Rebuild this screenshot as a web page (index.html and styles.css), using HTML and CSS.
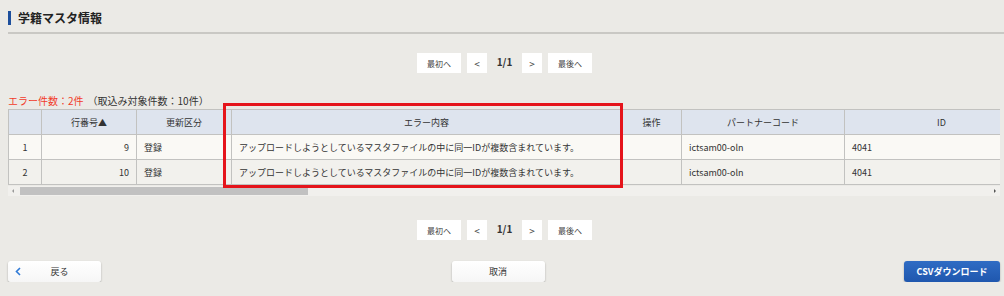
FILE: index.html
```html
<!DOCTYPE html>
<html lang="ja">
  <head>
    <meta charset="utf-8" />
    <title>学籍マスタ情報</title>
    <link rel="stylesheet" href="styles.css">
  </head>
  <body>
    <div class="page">
      <h1 class="pageTitle">学籍マスタ情報</h1>

      <div class="pager">
        <span class="pageBtn wide">最初へ</span>
        <span class="pageBtn">&lt;</span>
        <span class="pageNum">1/1</span>
        <span class="pageBtn">&gt;</span>
        <span class="pageBtn wide">最後へ</span>
      </div>

      <p class="errorCount"><span class="errRed">エラー件数：2件</span>（取込み対象件数：10件）</p>

      <div class="tableArea">
        <div class="tableScroll">
          <table class="resultTable">
            <colgroup>
              <col style="width:33px">
              <col style="width:95px">
              <col style="width:95px">
              <col style="width:390px">
              <col style="width:60px">
              <col style="width:163px">
              <col style="width:194px">
            </colgroup>
            <thead>
              <tr>
                <th></th>
                <th>行番号▲</th>
                <th>更新区分</th>
                <th>エラー内容</th>
                <th>操作</th>
                <th>パートナーコード</th>
                <th>ID</th>
              </tr>
            </thead>
            <tbody>
              <tr>
                <td class="center">1</td>
                <td class="num">9</td>
                <td>登録</td>
                <td>アップロードしようとしているマスタファイルの中に同一IDが複数含まれています。</td>
                <td></td>
                <td>ictsam00-oln</td>
                <td>4041</td>
              </tr>
              <tr>
                <td class="center">2</td>
                <td class="num">10</td>
                <td>登録</td>
                <td>アップロードしようとしているマスタファイルの中に同一IDが複数含まれています。</td>
                <td></td>
                <td>ictsam00-oln</td>
                <td>4041</td>
              </tr>
            </tbody>
          </table>
        </div>
        <div class="hScroll">
          <span class="arrowLeft"></span>
          <div class="hTrack"><div class="hThumb"></div></div>
          <span class="arrowRight"></span>
        </div>
        <div class="markBox"></div>
      </div>

      <div class="pager lower">
        <span class="pageBtn wide">最初へ</span>
        <span class="pageBtn">&lt;</span>
        <span class="pageNum">1/1</span>
        <span class="pageBtn">&gt;</span>
        <span class="pageBtn wide">最後へ</span>
      </div>

      <div class="footerBtns">
        <button class="btn backBtn">
          <svg class="chev" width="6" height="9" viewBox="0 0 6 9"><path d="M5 1 L1.5 4.5 L5 8" fill="none" stroke="#2f7ad6" stroke-width="1.6"/></svg>
          戻る
        </button>
        <button class="btn cancelBtn">取消</button>
        <button class="btn csvBtn">CSVダウンロード</button>
      </div>
    </div>
  </body>
</html>
```

FILE: styles.css
```css
html {
  background-color: #ebeae6;
}

body {
  margin: 0;
  font-family: "Noto Sans CJK JP", "Noto Sans", sans-serif;
  color: #333;
}

.page {
  padding: 0 0 0 8px;
}

.pageTitle {
  margin: 0;
  padding: 10px 0 6px 10px;
  font-size: 12px;
  line-height: 16px;
  font-weight: bold;
  color: #222;
  border-bottom: 2px solid #c9c8c4;
  position: relative;
}

.pageTitle::before {
  content: "";
  position: absolute;
  left: 0;
  top: 11px;
  width: 3px;
  height: 14px;
  background-color: #1d4f9c;
}

.pager {
  display: flex;
  justify-content: center;
  align-items: center;
  gap: 6px;
  margin-top: 19px;
  margin-right: 3px;
  height: 20px;
}

.pager.lower {
  margin-top: 24px;
}

.pageBtn {
  display: flex;
  align-items: center;
  justify-content: center;
  width: 20px;
  height: 20px;
  background-color: #fff;
  font-size: 10px;
  color: #444;
}

.pageBtn.wide {
  width: 44px;
  font-size: 8px;
}

.pageNum {
  width: 23px;
  text-align: center;
  font-size: 10px;
  font-weight: bold;
  color: #333;
  margin-top: -3px;
}

.errorCount {
  margin: 21px 0 0 0;
  font-size: 10px;
  line-height: 14px;
  color: #333;
}

.errRed {
  color: #f23a2a;
  margin-right: 4px;
}

.tableArea {
  position: relative;
  margin-top: 1px;
  margin-right: 4px;
}

.tableScroll {
  overflow: hidden;
}

.resultTable {
  border-collapse: collapse;
  table-layout: fixed;
  width: 1030px;
  font-size: 9px;
  color: #333;
}

.resultTable th,
.resultTable td {
  border: 1px solid #c2c2c0;
  height: 24px;
  padding: 0 7px;
  white-space: nowrap;
}

.resultTable th {
  background-color: #dee4ee;
  font-weight: normal;
  text-align: center;
}

.resultTable tbody tr:nth-child(1) td {
  background-color: #faf9f5;
}

.resultTable tbody tr:nth-child(2) td {
  background-color: #f2f1ed;
}

.resultTable td.center {
  text-align: center;
}

.resultTable td.num {
  text-align: right;
}

.hScroll {
  display: flex;
  align-items: center;
  height: 10px;
  margin-top: 1px;
  background-color: #f1f0ed;
}

.arrowLeft,
.arrowRight {
  width: 0;
  height: 0;
  border-top: 2px solid transparent;
  border-bottom: 2px solid transparent;
  margin: 0 4px;
}

.arrowLeft {
  border-right: 2px solid #999;
}

.arrowRight {
  border-left: 2px solid #555;
}

.hTrack {
  flex: 1;
  height: 8px;
  margin-left: 2px;
}

.hThumb {
  width: 288px;
  height: 8px;
  background-color: #c1c1c1;
}

.markBox {
  position: absolute;
  left: 215px;
  top: -6px;
  width: 394px;
  height: 79px;
  border: 3px solid #e5141b;
}

.footerBtns {
  display: flex;
  justify-content: space-between;
  align-items: center;
  margin-top: 21px;
  margin-right: 4px;
}

.btn {
  height: 21px;
  border-radius: 3px;
  font-family: "Noto Sans CJK JP", "Noto Sans", sans-serif;
  font-size: 9px;
  cursor: pointer;
}

.backBtn,
.cancelBtn {
  width: 93px;
  border: none;
  background: linear-gradient(#ffffff, #f6f6f6);
  box-shadow: 0 1px 2px rgba(0, 0, 0, 0.3);
  color: #333;
}

.backBtn {
  position: relative;
  padding-left: 16px;
}

.cancelBtn {
  margin-right: 9px;
}

.backBtn .chev {
  position: absolute;
  left: 7px;
  top: 6px;
}

.csvBtn {
  width: 96px;
  border: none;
  background: linear-gradient(#2f6cc4, #1f57ae);
  box-shadow: 0 1px 2px rgba(0, 0, 0, 0.3);
  color: #fff;
  font-weight: bold;
}
```
